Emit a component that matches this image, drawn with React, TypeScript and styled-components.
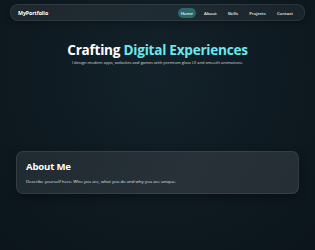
import React from 'react';
import styled, { createGlobalStyle } from 'styled-components';

const GlobalStyle = createGlobalStyle`
  html, body {
    margin: 0;
    padding: 0;
  }
  body {
    min-height: 250px;
    background: radial-gradient(circle at 50% 30%, #13222a 0%, #0e1920 60%, #0b151b 100%);
    font-family: "Open Sans", "Noto Sans", sans-serif;
    color: #fff;
  }
`;

const Page = styled.div`
  padding: 4px 10px 0;
`;

const Nav = styled.nav`
  display: flex;
  align-items: center;
  justify-content: space-between;
  height: 15px;
  padding: 0 8px 0 7px;
  border-radius: 8px;
  background: linear-gradient(90deg, rgba(255, 255, 255, 0.07), rgba(255, 255, 255, 0.05));
  border: 1px solid rgba(255, 255, 255, 0.08);
  box-shadow: 0 2px 6px rgba(0, 0, 0, 0.3);
`;

const Logo = styled.div`
  font-size: 5.3px;
  font-weight: 700;
  letter-spacing: -0.1px;
`;

const Links = styled.div`
  display: flex;
  align-items: center;
  gap: 5px;
`;

const Link = styled.a<{ $active?: boolean }>`
  font-size: 4.3px;
  font-weight: 600;
  color: #e8eef0;
  padding: 2px 3px;
  border-radius: 6px;
  background: ${({ $active }) => ($active ? '#2c676c' : 'transparent')};
`;

const Hero = styled.section`
  text-align: center;
  padding-top: 21px;
`;

const Title = styled.h1`
  margin: 0;
  font-size: 13.6px;
  font-weight: 700;
  letter-spacing: -0.25px;
  line-height: 1.2;

  span {
    color: #6ee6ee;
  }
`;

const Subtitle = styled.p`
  margin: 2px 0 0;
  font-size: 4.05px;
  color: #d3dcdf;
`;

const Card = styled.section`
  margin: 86px 6px 0;
  padding: 8px 9px 9px;
  border-radius: 7px;
  background: linear-gradient(120deg, #202a31 0%, #283138 60%, #252e35 100%);
  border: 1px solid rgba(255, 255, 255, 0.08);
  box-shadow: 0 3px 10px rgba(0, 0, 0, 0.35);
`;

const CardTitle = styled.h2`
  margin: 0 0 5px;
  font-size: 9.6px;
  font-weight: 700;
  letter-spacing: -0.2px;
`;

const CardText = styled.p`
  margin: 0;
  font-size: 4.3px;
  color: #dde3e6;
`;

export default function App() {
  return (
    <>
      <GlobalStyle />
      <Page>
        <Nav>
          <Logo>MyPortfolio</Logo>
          <Links>
            <Link $active>Home</Link>
            <Link>About</Link>
            <Link>Skills</Link>
            <Link>Projects</Link>
            <Link>Contact</Link>
          </Links>
        </Nav>
        <Hero>
          <Title>
            Crafting <span>Digital Experiences</span>
          </Title>
          <Subtitle>I design modern apps, websites and games with premium glass UI and smooth animations.</Subtitle>
        </Hero>
        <Card>
          <CardTitle>About Me</CardTitle>
          <CardText>Describe yourself here. Who you are, what you do and why you are unique.</CardText>
        </Card>
      </Page>
    </>
  );
}
